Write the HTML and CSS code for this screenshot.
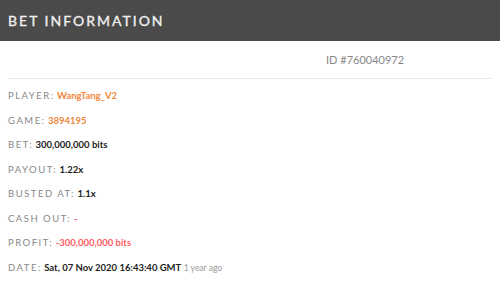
FILE: index.html
```html
<!DOCTYPE html>
<html lang="en">
<head>
    <meta charset="UTF-8">
    <meta name="viewport" content="width=device-width, initial-scale=1.0">
    <title>Bet Information</title>
    <link rel="stylesheet" href="styles.css">
</head>
<body>
  <div class="header">
      <h1>BET INFORMATION</h1>
  </div>
  <div class="bet-id">ID #760040972</div>
  <div class="details">
      <div class="row"><span class="label">PLAYER:</span> <span class="value orange">WangTang_V2</span></div>
      <div class="row"><span class="label">GAME:</span> <span class="value orange">3894195</span></div>
      <div class="row"><span class="label">BET:</span> <span class="value">300,000,000 bits</span></div>
      <div class="row"><span class="label">PAYOUT:</span> <span class="value">1.22x</span></div>
      <div class="row"><span class="label">BUSTED AT:</span> <span class="value">1.1x</span></div>
      <div class="row"><span class="label">CASH OUT:</span> <span class="value red">-</span></div>
      <div class="row"><span class="label">PROFIT:</span> <span class="value red">-300,000,000 bits</span></div>
      <div class="row"><span class="label">DATE:</span> <span class="value">Sat, 07 Nov 2020 16:43:40 GMT</span> <span class="ago">1 year ago</span></div>
  </div>
</body>
</html>
```

FILE: styles.css
```css
body {
    margin: 0;
    font-family: Lato, "Open Sans", sans-serif;
    background: #fff;
    color: #333;
}

.header {
    height: 41px;
    background-color: #4a4a4a;
    display: flex;
    align-items: center;
    padding: 0 8px;
}

.header h1 {
    margin: 0;
    font-size: 14px;
    font-weight: 400;
    letter-spacing: 2px;
    color: #f2f2f2;
    -webkit-text-stroke: 0.3px #f2f2f2;
}

.bet-id {
    height: 37px;
    margin: 0 8px;
    padding-left: 318px;
    display: flex;
    align-items: center;
    font-size: 11px;
    color: #888;
    border-bottom: 1px solid #e6e6e6;
}

.details {
    padding: 5px 8px 0;
}

.row {
    height: 24.5px;
    line-height: 24.5px;
    font-size: 9.5px;
}

.label {
    color: #888;
    letter-spacing: 1.5px;
}

.value {
    font-weight: 700;
    color: #222;
}

.orange {
    color: #f0883e;
}

.red {
    color: #ff5b5f;
}

.ago {
    font-size: 8.5px;
    color: #999;
}
```
